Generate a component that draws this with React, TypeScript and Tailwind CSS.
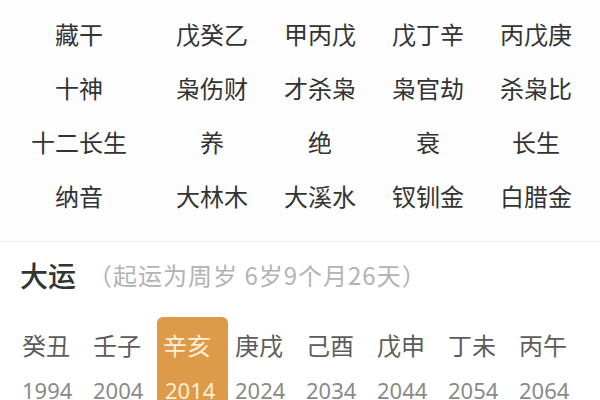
import React from 'react';

const rows = [
  ['藏干', '戊癸乙', '甲丙戊', '戊丁辛', '丙戊庚'],
  ['十神', '枭伤财', '才杀枭', '枭官劫', '杀枭比'],
  ['十二长生', '养', '绝', '衰', '长生'],
  ['纳音', '大林木', '大溪水', '钗钏金', '白腊金'],
];

const dayun = [
  { gz: '癸丑', year: '1994' },
  { gz: '壬子', year: '2004' },
  { gz: '辛亥', year: '2014', active: true },
  { gz: '庚戌', year: '2024' },
  { gz: '己酉', year: '2034' },
  { gz: '戊申', year: '2044' },
  { gz: '丁未', year: '2054' },
  { gz: '丙午', year: '2064' },
];

export default function App() {
  return (
    <div className="w-[600px] h-[400px] overflow-hidden bg-white font-['Noto_Sans_CJK_SC','Noto_Sans',sans-serif]">
      <div className="bg-[#fdfdfd] border-b border-[#ececec] pt-[7px] pb-[18px]">
        {rows.map((row, i) => (
          <div key={i} className="grid grid-cols-[158px_108px_108px_108px_108px] h-[54px] items-center">
            {row.map((cell, j) => (
              <div key={j} className="text-center text-[24px] leading-[32px] text-[#333]">
                {cell}
              </div>
            ))}
          </div>
        ))}
      </div>

      <div className="pt-[15px]">
        <div className="flex items-center h-[36px] pl-[20px]">
          <span className="text-[28px] leading-[36px] text-[#333] font-medium">大运</span>
          <span className="ml-[12px] text-[24px] leading-[36px] tracking-[1px] text-[#b3b3b3]">（起运为周岁 6岁9个月26天）</span>
        </div>

        <div className="flex pl-[15px] mt-[24px]">
          {dayun.map((d) => (
            <div
              key={d.year}
              className={
                d.active
                  ? 'w-[71px] shrink-0 pl-[6px] pt-[12px] h-[100px] rounded-t-[6px] bg-[#dd9a48]'
                  : 'w-[71px] shrink-0 pl-[7px] pt-[12px] h-[100px]'
              }
            >
              <div className={d.active ? 'text-[24px] leading-[32px] text-[#fdf0d8]' : 'text-[24px] leading-[32px] text-[#5c5c5c]'}>
                {d.gz}
              </div>
              <div
                className={
                  d.active
                    ? "mt-[13px] pl-[2px] text-[22px] leading-[32px] text-[#fdf0d8] font-['Noto_Sans',sans-serif]"
                    : "mt-[13px] text-[22px] leading-[32px] text-[#8a8a8a] font-['Noto_Sans',sans-serif]"
                }
              >
                {d.year}
              </div>
            </div>
          ))}
        </div>
      </div>
    </div>
  );
}
